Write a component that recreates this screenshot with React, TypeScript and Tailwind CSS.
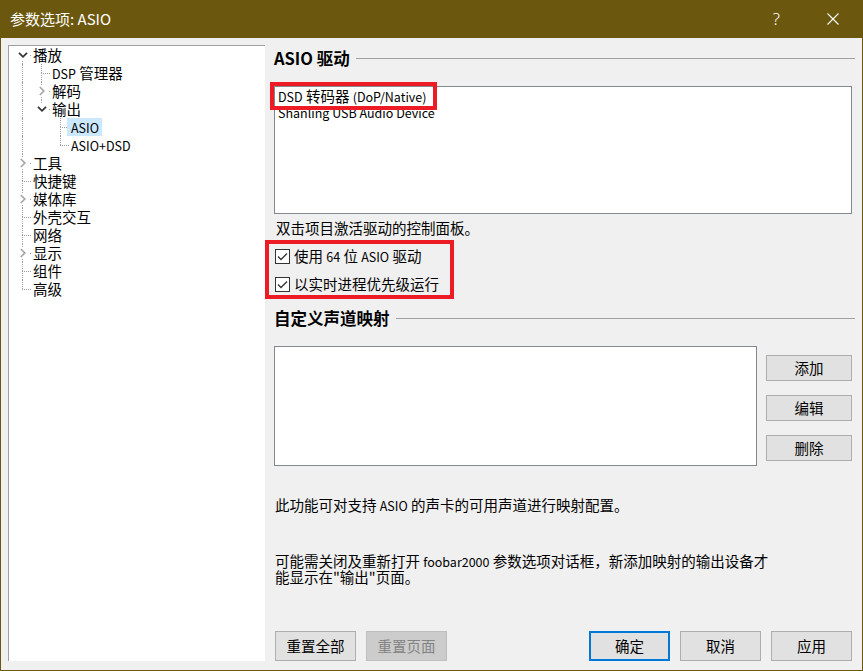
import React from "react";

type Node = { label: React.ReactNode; d: number; kind?: "exp" | "col"; sel?: boolean };

// latin runs are a bit smaller than the CJK glyphs in the original dialog font
function L({ children }: { children: React.ReactNode }) {
  return <span className="text-[12.5px]">{children}</span>;
}

const tree: Node[] = [
  { label: "播放", d: 0, kind: "exp" },
  { label: <><L>DSP</L> 管理器</>, d: 1 },
  { label: "解码", d: 1, kind: "col" },
  { label: "输出", d: 1, kind: "exp" },
  { label: <L>ASIO</L>, d: 2, sel: true },
  { label: <L>ASIO+DSD</L>, d: 2 },
  { label: "工具", d: 0, kind: "col" },
  { label: "快捷键", d: 0 },
  { label: "媒体库", d: 0, kind: "col" },
  { label: "外壳交互", d: 0 },
  { label: "网络", d: 0 },
  { label: "显示", d: 0, kind: "col" },
  { label: "组件", d: 0 },
  { label: "高级", d: 0 },
];

function hasNext(i: number) {
  const d = tree[i].d;
  for (let j = i + 1; j < tree.length; j++) {
    if (tree[j].d < d) return false;
    if (tree[j].d === d) return true;
  }
  return false;
}

function ancestor(i: number, depth: number) {
  for (let j = i - 1; j >= 0; j--) if (tree[j].d === depth) return j;
  return -1;
}

function TreeRow({ node, i }: { node: Node; i: number }) {
  const cols = [];
  for (let c = 0; c <= node.d; c++) {
    if (c < node.d) {
      const a = ancestor(i, c);
      cols.push(
        <div key={c} className="relative w-[19px] h-full shrink-0">
          {a >= 0 && hasNext(a) && (
            <div className="absolute left-[9px] top-0 bottom-0 border-l border-dotted border-[#a0a0a0]" />
          )}
        </div>
      );
    } else {
      const next = hasNext(i);
      cols.push(
        <div key={c} className="relative w-[19px] h-full shrink-0">
          {i !== 0 && (
            <div className="absolute left-[9px] top-0 h-[9px] border-l border-dotted border-[#a0a0a0]" />
          )}
          {next && (
            <div className="absolute left-[9px] top-[9px] bottom-0 border-l border-dotted border-[#a0a0a0]" />
          )}
          <div className="absolute left-[9px] top-[9px] w-[9px] border-t border-dotted border-[#a0a0a0]" />
          {node.kind && (
            <div className="absolute left-[3px] top-[3px] w-[13px] h-[12px] bg-white flex items-center justify-center">
              {node.kind === "exp" ? (
                <svg width="10" height="6" viewBox="0 0 10 6">
                  <polyline points="1,0.8 5,4.8 9,0.8" fill="none" stroke="#333333" strokeWidth="1.7" />
                </svg>
              ) : (
                <svg width="6" height="10" viewBox="0 0 6 10">
                  <polyline points="0.8,1 4.8,5 0.8,9" fill="none" stroke="#a6a6a6" strokeWidth="1.7" />
                </svg>
              )}
            </div>
          )}
        </div>
      );
    }
  }
  return (
    <div className="flex h-[18px] items-center">
      {cols}
      <span
        className={`relative -ml-[3px] pl-[4px] pr-[3px] h-[18px] leading-[18px] whitespace-nowrap ${
          node.sel ? "bg-[#cce8ff]" : ""
        }`}
      >
        {node.label}
      </span>
    </div>
  );
}

function CheckBox() {
  return (
    <span className="w-[15px] h-[15px] border border-[#333333] bg-white flex items-center justify-center shrink-0">
      <svg width="11" height="9" viewBox="0 0 11 9">
        <path d="M1 4.5 L4 7.5 L10 1.5" fill="none" stroke="#333333" strokeWidth="1.3" />
      </svg>
    </span>
  );
}

function Heading({ text }: { text: string }) {
  return (
    <div className="flex items-center h-[20px] gap-[6px]">
      <span className="text-[16.5px] font-bold leading-[20px] whitespace-nowrap">{text}</span>
      <div className="flex-1 h-px bg-[#a0a0a0] mt-px -mr-[3px]" />
    </div>
  );
}

const sideBtn =
  "w-[86px] h-[26px] bg-[#e1e1e1] border border-[#adadad] flex items-center justify-center leading-none";
const bottomBtn =
  "w-[81px] h-[30px] bg-[#e1e1e1] border border-[#adadad] flex items-center justify-center leading-none";

export default function App() {
  return (
    <div className="w-[863px] h-[671px] flex flex-col text-[14.5px] text-black font-['Noto_Sans_CJK_SC',sans-serif] overflow-hidden">
      {/* title bar */}
      <div className="h-[38px] bg-[#6b570d] flex items-center text-white shrink-0">
        <span className="pl-[10px] text-[15px] flex-1">参数选项: ASIO</span>
        <span className="text-[17px] font-light mr-[47px] font-['Noto_Sans',sans-serif]">?</span>
        <svg width="12" height="12" viewBox="0 0 12 12" className="mr-[24px]">
          <path d="M0.5 0.5 L11.5 11.5 M11.5 0.5 L0.5 11.5" stroke="white" strokeWidth="1.1" />
        </svg>
      </div>

      <div className="flex-1 flex bg-[#f0f0f0] border-x border-b border-[#6b570d] min-h-0">
        {/* tree */}
        <div className="w-[257px] ml-[7px] mt-[7px] mb-[9px] bg-white border-l border-t border-[#a0a0a0] pl-[4px] shrink-0">
          {tree.map((n, i) => (
            <TreeRow key={i} node={n} i={i} />
          ))}
        </div>

        {/* right panel */}
        <div className="flex-1 flex flex-col pl-[9px] pr-[10px] min-w-0">
          <div className="mt-[10px]">
            <Heading text="ASIO 驱动" />
          </div>

          <div className="relative mt-[18px] h-[128px] bg-white border border-[#828790] pl-[3px]">
            <div className="h-[17px] leading-[17px] whitespace-nowrap flex items-center">
              <span>
                <L>DSD</L> 转码器 <L>(DoP/Native)</L>
              </span>
            </div>
            <div className="h-[17px] leading-[17px] whitespace-nowrap flex items-center">
              <L>Shanling USB Audio Device</L>
            </div>
            <div className="absolute left-[-5px] top-[-5px] w-[167px] h-[28px] border-[4px] border-[#ed1c24]" />
          </div>

          <div className="mt-[5px] leading-[17px] pl-[2px]">双击项目激活驱动的控制面板。</div>

          <div className="relative mt-[10px]">
            <div className="flex items-center gap-[4px] h-[20px] ml-[1px]">
              <CheckBox />
              <span>
                使用 <L>64</L> 位 <L>ASIO</L> 驱动
              </span>
            </div>
            <div className="flex items-center gap-[4px] h-[20px] ml-[1px] mt-[8px]">
              <CheckBox />
              <span>以实时进程优先级运行</span>
            </div>
            <div className="absolute left-[-9px] top-[-6px] w-[189px] h-[59px] border-[4px] border-[#ed1c24]" />
          </div>

          <div className="mt-[14px]">
            <Heading text="自定义声道映射" />
          </div>

          <div className="flex gap-[9px] mt-[18px]">
            <div className="flex-1 h-[120px] bg-white border border-[#828790]" />
            <div className="flex flex-col gap-[14px] pt-[9px]">
              <button className={sideBtn}>添加</button>
              <button className={sideBtn}>编辑</button>
              <button className={sideBtn}>删除</button>
            </div>
          </div>

          <div className="mt-[30px] leading-[17px] pl-[1px] whitespace-nowrap">
            此功能可对支持 <L>ASIO</L> 的声卡的可用声道进行映射配置。
          </div>

          <div className="mt-[39px] pl-[1px]">
            <div className="h-[16px] leading-[16px] whitespace-nowrap">
              可能需关闭及重新打开 <L>foobar2000</L> 参数选项对话框，新添加映射的输出设备才
            </div>
            <div className="h-[16px] leading-[16px] whitespace-nowrap">能显示在"输出"页面。</div>
          </div>

          <div className="mt-auto mb-[9px] flex items-center justify-between ml-[1px]">
            <div className="flex gap-[10px]">
              <button className={bottomBtn}>重置全部</button>
              <button className="w-[81px] h-[30px] bg-[#cccccc] border border-[#bfbfbf] text-[#838383] flex items-center justify-center leading-none">
                重置页面
              </button>
            </div>
            <div className="flex gap-[10px]">
              <button className="w-[81px] h-[30px] bg-[#e1e1e1] border-2 border-[#0078d7] flex items-center justify-center leading-none">
                确定
              </button>
              <button className={bottomBtn}>取消</button>
              <button className={bottomBtn}>应用</button>
            </div>
          </div>
        </div>
      </div>
    </div>
  );
}
